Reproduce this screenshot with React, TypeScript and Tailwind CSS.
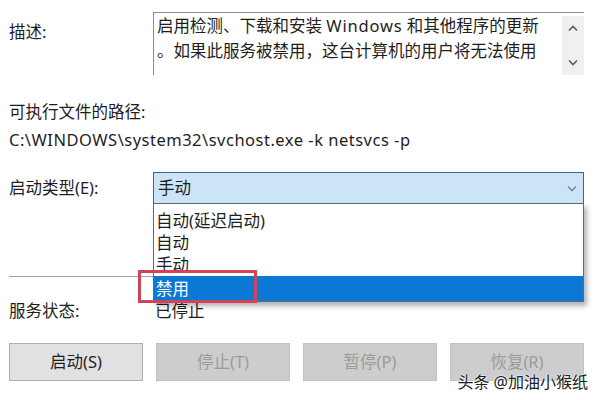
import React from "react";

const font = "font-['Noto_Sans','Noto_Sans_CJK_SC',sans-serif]";

function Chevron({ dir, className }: { dir: "up" | "down"; className?: string }) {
  return (
    <svg width="10" height="7" viewBox="0 0 10 7" className={className}>
      <polyline
        points={dir === "up" ? "1,5.5 5,1.5 9,5.5" : "1,1.5 5,5.5 9,1.5"}
        fill="none"
        stroke="currentColor"
        strokeWidth="1.6"
      />
    </svg>
  );
}

function Button({ label, disabled }: { label: string; disabled?: boolean }) {
  return (
    <div
      className={`h-[38px] flex items-center justify-center border ${
        disabled
          ? "bg-[#cdcdcd] border-[#c2c2c2] text-[#9b9b9b]"
          : "bg-[#e1e1e1] border-[#adadad] text-[#1e1e1e]"
      }`}
    >
      {label}
    </div>
  );
}

export default function App() {
  const options = ["自动(延迟启动)", "自动", "手动"];

  return (
    <div
      className={`relative w-[600px] h-[400px] overflow-hidden bg-white text-[#1e1e1e] text-[16.5px] pl-[9px] pr-[16px] ${font}`}
    >
      {/* description */}
      <div className="flex pt-[12px]">
        <div className="w-[144px] pt-[8px] leading-[24px]">描述:</div>
        <div className="flex-1 h-[63px] flex border-t border-l border-[#8c8c8c]">
          <div className="flex-1 pl-[3px] leading-[25px] whitespace-nowrap overflow-hidden">
            启用检测、下载和安装 <span className="tracking-[0.8px]">Windows</span> 和其他程序的更新
            <br />
            。如果此服务被禁用，这台计算机的用户将无法使用
          </div>
          <div className="w-[22px] mt-[3px] bg-[#f0f0f0] flex flex-col items-center justify-between py-[9px] text-[#5a5a5a]">
            <Chevron dir="up" />
            <Chevron dir="down" />
          </div>
        </div>
      </div>

      {/* path */}
      <div className="mt-[25px] leading-[24px]">可执行文件的路径:</div>
      <div className="mt-[4px] leading-[24px] tracking-[0.5px]">C:\WINDOWS\system32\svchost.exe -k netsvcs -p</div>

      {/* startup type */}
      <div className="mt-[20px] flex items-center">
        <div className="w-[144px] leading-[24px]">启动类型(E):</div>
        <div className="relative flex-1 h-[32px] border border-[#3a6788] bg-[#cce4f7] flex items-center pl-[4px] z-10">
          <span>手动</span>
          <Chevron dir="down" className="ml-auto mr-[6px] text-[#7a8a98]" />
          <div className="absolute left-[-1px] right-[-1px] top-[30px] border border-[#5c6b78] bg-white pt-[6px] shadow-[3px_4px_5px_rgba(0,0,0,0.3)]">
            {options.map((o) => (
              <div key={o} className="h-[22px] leading-[22px] pl-[2px]">
                {o}
              </div>
            ))}
            <div className="h-[25px] leading-[25px] pl-[2px] bg-[#0a78d4] text-white">禁用</div>
          </div>
        </div>
      </div>

      {/* separator */}
      <div className="mt-[72px] border-t border-[#a3a3a3]" />

      {/* status */}
      <div className="mt-[22px] flex leading-[24px]">
        <div className="w-[146px]">服务状态:</div>
        <div>已停止</div>
      </div>

      {/* buttons */}
      <div className="mt-[20px] grid grid-cols-4 gap-[13px]">
        <Button label="启动(S)" />
        <Button label="停止(T)" disabled />
        <Button label="暂停(P)" disabled />
        <Button label="恢复(R)" disabled />
      </div>

      {/* annotation */}
      <div className="absolute left-[138px] top-[270px] w-[119px] h-[33px] border-[3px] border-[#cf4459] z-20" />

      {/* watermark */}
      <div className="absolute right-[12px] top-[371px] text-[16px] leading-[22px] text-[#222] [text-shadow:0_0_2px_#fff,0_0_2px_#fff] z-30">
        头条 @加油小猴纸
      </div>
    </div>
  );
}
